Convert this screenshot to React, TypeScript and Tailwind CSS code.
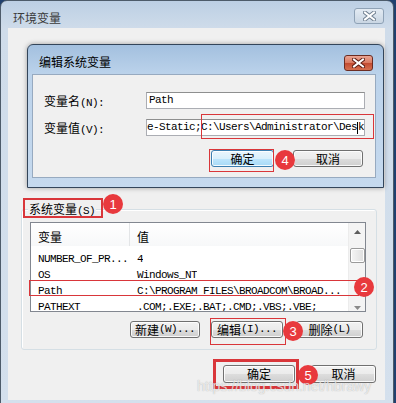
import type { ReactNode } from "react";

const cjk = "font-['Noto_Sans_CJK_SC',sans-serif]";
const mono = "font-['Liberation_Mono','Noto_Sans_CJK_SC',monospace] text-[11px] tracking-[-0.6px]";

const C = ({ children }: { children: ReactNode }) => <span className={`${cjk} text-[12px]`}>{children}</span>;
const M = ({ children }: { children: ReactNode }) => <span className={mono}>{children}</span>;

type BtnProps = { w: string; h?: string; blue?: boolean; children: ReactNode };

function Btn({ w, h = "h-[17px]", blue = false, children }: BtnProps) {
  return (
    <div
      className={`${w} ${h} flex items-center justify-center rounded-[3px] border leading-none text-black shadow-[inset_0_0_0_1px_rgba(255,255,255,0.85)] ${
        blue
          ? "border-[#3c7fb1] bg-[linear-gradient(to_bottom,#eaf6fd_0%,#d9f0fc_50%,#bee6fd_51%,#a7d9f5_100%)]"
          : "border-[#707070] bg-[linear-gradient(to_bottom,#f2f2f2_0%,#ebebeb_50%,#dddddd_51%,#cfcfcf_100%)]"
      }`}
    >
      {children}
    </div>
  );
}

function CloseX({ red = false }: { red?: boolean }) {
  return (
    <svg width="13" height="10" viewBox="0 0 13 10">
      <path d="M2 1.5 L11 8.5 M11 1.5 L2 8.5" stroke={red ? "#5a1a10" : "#6f7f90"} strokeWidth="4" strokeLinecap="square" />
      <path d="M2 1.5 L11 8.5 M11 1.5 L2 8.5" stroke="#ffffff" strokeWidth="2" strokeLinecap="square" />
    </svg>
  );
}

const Mark = ({ n, cls }: { n: number; cls: string }) => (
  <div className={`absolute ${cls} w-[20px] h-[20px] rounded-full bg-[#e8393d] flex items-center justify-center text-white text-[13px] leading-none font-['Liberation_Sans',sans-serif]`}>
    {n}
  </div>
);

const rows = [
  ["NUMBER_OF_PR...", "4"],
  ["OS", "Windows_NT"],
  ["Path", "C:\\PROGRAM FILES\\BROADCOM\\BROAD..."],
  ["PATHEXT", ".COM;.EXE;.BAT;.CMD;.VBS;.VBE;"],
];

export default function App() {
  return (
    <div className="relative w-[396px] h-[403px] overflow-hidden bg-[#20406e]">
      <div className="w-[394px] h-[410px] border border-[#4d5b6a] rounded-t-[7px] bg-[linear-gradient(to_bottom,#bccfe4_0px,#cfdcea_28px,#d4e0ed_100%)]">
        {/* outer title bar */}
        <div className="h-[27px] flex items-start justify-between">
          <span className={`${cjk} ml-[12px] mt-[11px] text-[12px] leading-none text-[#3a3a3a]`}>环境变量</span>
          <div className="mt-[7px] mr-[9px] w-[30px] h-[16px] rounded-[3px] border border-[#8fa2b6] bg-[linear-gradient(to_bottom,#e3ebf3,#c9d6e3)] flex items-center justify-center">
            <CloseX />
          </div>
        </div>

        {/* outer content */}
        <div className="ml-[7px] w-[377px] h-[372px] bg-[#f0f0f0] flex flex-col">
          {/* edit dialog */}
          <div className="ml-[19px] mt-[16px] w-[357px] h-[144px] border border-[#33455a] rounded-t-[6px] bg-[linear-gradient(to_bottom,#a3c0df_0px,#bcd3eb_30px,#c5d9ee_100%)] shadow-[0_0_5px_rgba(0,0,0,0.35)] flex flex-col">
            <div className="h-[29px] flex items-start">
              <span className={`${cjk} ml-[11px] mt-[11px] text-[12px] leading-none text-black`}>编辑系统变量</span>
              <div className="ml-auto mr-[10px] mt-[10px] w-[29px] h-[16px] rounded-[3px] border border-[#6b2c22] bg-[linear-gradient(to_bottom,#eaa594_0%,#d9785f_50%,#c24a30_51%,#d5704f_100%)] flex items-center justify-center">
                <CloseX red />
              </div>
            </div>
            <div className="ml-[4px] w-[344px] h-[104px] bg-[#f0f0f0] border border-[#97aac0] flex flex-col">
              <div className="mt-[17px] h-[17px] flex items-center">
                <div className="ml-[11px] w-[102px] leading-none">
                  <C>变量名</C>
                  <M>(N):</M>
                </div>
                <div className="w-[219px] h-[17px] bg-white border border-[#abadb3] border-t-[#8e8f8f] flex items-center pl-[2px]">
                  <M>Path</M>
                </div>
              </div>
              <div className="mt-[10px] h-[17px] flex items-center">
                <div className="ml-[11px] w-[102px] leading-none">
                  <C>变量值</C>
                  <M>(V):</M>
                </div>
                <div className="w-[219px] h-[17px] bg-white border border-[#abadb3] border-t-[#8e8f8f] flex items-center overflow-hidden whitespace-nowrap">
                  <M>{"e-Static;C:\\Users\\Administrator\\Des"}</M>
                  <span className="inline-block w-px h-[12px] bg-black"></span>
                  <M>k</M>
                </div>
              </div>
              <div className="mt-[14px] flex justify-end pr-[12px]">
                <Btn w="w-[63px]" blue>
                  <C>确定</C>
                </Btn>
                <div className="ml-[19px]">
                  <Btn w="w-[70px]">
                    <C>取消</C>
                  </Btn>
                </div>
              </div>
            </div>
          </div>

          {/* system variables group */}
          <div className="mt-[21px] ml-[13px] w-[356px] h-[141px] border border-[#d5dfe5] rounded-[3px] shadow-[inset_1px_1px_0_#ffffff] flex flex-col">
            <div className="-mt-[10px] ml-[6px] w-fit px-[1px] bg-[#f0f0f0] h-[17px] leading-[17px] text-black">
              <C>系统变量</C>
              <M>(S)</M>
            </div>
            <div className="mt-[5px] ml-[8px] w-[336px] h-[90px] border border-[#828790] bg-white flex overflow-hidden">
              <div className="flex-1 flex flex-col">
                <div className="h-[23px] flex shrink-0 bg-[linear-gradient(to_bottom,#ffffff,#f7f8f9)]">
                  <div className="w-[99px] pl-[7px] pt-[5px] border-r border-[#e3e5e7] leading-[17px]">
                    <C>变量</C>
                  </div>
                  <div className="pl-[7px] pt-[5px] leading-[17px]">
                    <C>值</C>
                  </div>
                </div>
                <div className="mt-[2px] flex flex-col">
                  {rows.map(([k, v]) => (
                    <div key={k} className="h-[16px] flex items-center shrink-0 text-black">
                      <div className="w-[99px] pl-[7px] whitespace-nowrap">
                        <M>{k}</M>
                      </div>
                      <div className="pl-[7px] whitespace-nowrap overflow-hidden">
                        <M>{v}</M>
                      </div>
                    </div>
                  ))}
                </div>
              </div>
              <div className="w-[17px] bg-[#f4f4f4] border-l border-[#ececec] flex flex-col items-center">
                <div className="h-[17px] flex items-center justify-center">
                  <svg width="7" height="4" viewBox="0 0 7 4">
                    <path d="M0 4 L3.5 0 L7 4 Z" fill="#5d5d5d" />
                  </svg>
                </div>
                <div className="mt-[8px] w-[15px] h-[15px] rounded-[2px] border border-[#9a9a9a] bg-[linear-gradient(to_right,#f5f5f5,#dedede)] shadow-[inset_0_0_0_1px_#ffffff]"></div>
                <div className="flex-1 flex items-end pb-[1px]">
                  <svg width="7" height="4" viewBox="0 0 7 4">
                    <path d="M0 0 L3.5 4 L7 0 Z" fill="#8a8a8a" />
                  </svg>
                </div>
              </div>
            </div>
            <div className="mt-[9px] flex justify-end pr-[13px]">
              <Btn w="w-[70px]">
                <C>新建</C>
                <M>(W)...</M>
              </Btn>
              <div className="ml-[11px]">
                <Btn w="w-[72px]">
                  <C>编辑</C>
                  <M>(I)...</M>
                </Btn>
              </div>
              <div className="ml-[13px]">
                <Btn w="w-[67px]">
                  <C>删除</C>
                  <M>(L)</M>
                </Btn>
              </div>
            </div>
          </div>

          {/* bottom buttons */}
          <div className="mt-[15px] flex justify-end pr-[9px]">
            <Btn w="w-[72px]" h="h-[18px]">
              <C>确定</C>
            </Btn>
            <div className="ml-[16px]">
              <Btn w="w-[65px]" h="h-[18px]">
                <C>取消</C>
              </Btn>
            </div>
          </div>
        </div>
      </div>

      {/* annotations */}
      <div className="absolute left-[201px] top-[114px] w-[173px] h-[25px] border border-[#d9363a]"></div>
      <div className="absolute left-[209px] top-[149px] w-[65px] h-[23px] border border-[#d9363a]"></div>
      <Mark n={4} cls="left-[275px] top-[150px]" />
      <div className="absolute left-[23px] top-[198px] w-[80px] h-[20px] border-2 border-[#d9363a]"></div>
      <Mark n={1} cls="left-[103px] top-[194px]" />
      <div className="absolute left-[29px] top-[280px] w-[330px] h-[16px] border border-[#d9363a]"></div>
      <Mark n={2} cls="left-[354px] top-[277px]" />
      <div className="absolute left-[210px] top-[318px] w-[76px] h-[27px] border border-[#d9363a]"></div>
      <Mark n={3} cls="left-[283px] top-[321px]" />
      <div className="absolute left-[213px] top-[359px] w-[86px] h-[30px] border-[3px] border-[#d9363a]"></div>
      <Mark n={5} cls="left-[298px] top-[365px]" />

      <div className="absolute left-[197px] top-[379px] text-[14px] leading-none text-white/70 font-['Liberation_Sans',sans-serif] [text-shadow:0_0_1px_rgba(120,120,120,0.6)]">
        https://blog.csdn.net/hbrawy
      </div>
    </div>
  );
}
